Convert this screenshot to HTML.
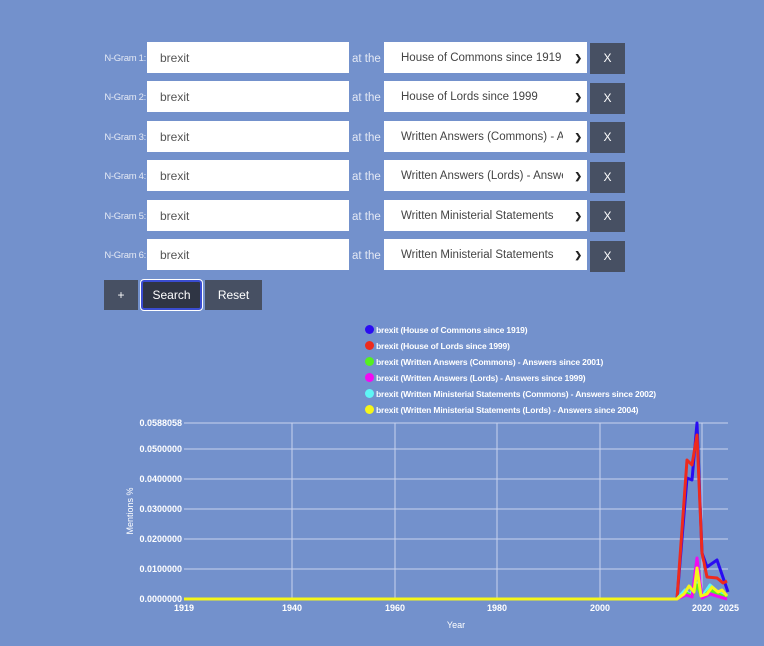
<!DOCTYPE html>
<html><head><style>
body{margin:0;width:764px;height:646px;background:#7391cc;font-family:"Liberation Sans",sans-serif;position:relative;overflow:hidden}
.a{position:absolute}
.lbl{font-size:9.5px;color:#e3e8f4;width:44px;text-align:right;white-space:nowrap;letter-spacing:-0.3px;margin-top:1px}
.inp{background:#fff;width:202px;height:31px;font-size:12px;color:#555;line-height:32px;box-sizing:border-box;padding-left:13px}
.at{font-size:11.5px;color:#e3e8f4;margin-top:2px}
.sel{background:#fff;width:203px;height:31px;font-size:11.5px;color:#444;line-height:32px;box-sizing:border-box;padding-left:17px;white-space:nowrap;overflow:hidden}
.sel b{display:block;width:162px;overflow:hidden;font-weight:normal}
.sel span.c{position:absolute;right:5px;top:0;font-size:9px;color:#222;font-weight:bold}
.x{background:#475063;width:35px;height:31px;color:#fff;font-size:12px;text-align:center;line-height:31px}
.btn{background:#475063;color:#fff;height:30px;line-height:30px;font-size:12px;text-align:center}
.lg{font-size:8.5px;color:#fff;left:365px;font-weight:bold;letter-spacing:-0.15px}
.lg i{display:inline-block;width:9px;height:9px;border-radius:50%;vertical-align:-1px;margin-right:2px}
</style></head><body>
<div class="a lbl" style="left:102px;top:52px">N-Gram 1:</div><div class="a inp" style="left:147px;top:42px">brexit</div><div class="a at" style="left:352px;top:51px">at the</div><div class="a sel" style="left:384px;top:42px"><b>House of Commons since 1919</b><span class="c">&#10095;</span></div><div class="a x" style="left:590px;top:43px">X</div>
<div class="a lbl" style="left:102px;top:91px">N-Gram 2:</div><div class="a inp" style="left:147px;top:81px">brexit</div><div class="a at" style="left:352px;top:90px">at the</div><div class="a sel" style="left:384px;top:81px"><b>House of Lords since 1999</b><span class="c">&#10095;</span></div><div class="a x" style="left:590px;top:83px">X</div>
<div class="a lbl" style="left:102px;top:131px">N-Gram 3:</div><div class="a inp" style="left:147px;top:121px">brexit</div><div class="a at" style="left:352px;top:130px">at the</div><div class="a sel" style="left:384px;top:121px"><b>Written Answers (Commons) - Answers</b><span class="c">&#10095;</span></div><div class="a x" style="left:590px;top:122px">X</div>
<div class="a lbl" style="left:102px;top:170px">N-Gram 4:</div><div class="a inp" style="left:147px;top:160px">brexit</div><div class="a at" style="left:352px;top:169px">at the</div><div class="a sel" style="left:384px;top:160px"><b>Written Answers (Lords) - Answers</b><span class="c">&#10095;</span></div><div class="a x" style="left:590px;top:162px">X</div>
<div class="a lbl" style="left:102px;top:210px">N-Gram 5:</div><div class="a inp" style="left:147px;top:200px">brexit</div><div class="a at" style="left:352px;top:209px">at the</div><div class="a sel" style="left:384px;top:200px"><b>Written Ministerial Statements</b><span class="c">&#10095;</span></div><div class="a x" style="left:590px;top:201px">X</div>
<div class="a lbl" style="left:102px;top:249px">N-Gram 6:</div><div class="a inp" style="left:147px;top:239px">brexit</div><div class="a at" style="left:352px;top:248px">at the</div><div class="a sel" style="left:384px;top:239px"><b>Written Ministerial Statements</b><span class="c">&#10095;</span></div><div class="a x" style="left:590px;top:241px">X</div>
<div class="a btn" style="left:104px;top:280px;width:34px">+</div>
<div class="a btn" style="left:141px;top:280px;width:57px;height:26px;line-height:26px;background:#2f3544;border:2px solid #3a4cd0;border-radius:3px;outline:1px solid #fff">Search</div>
<div class="a btn" style="left:205px;top:280px;width:57px">Reset</div>
<div class="a lg" style="top:325px"><i style="background:#2a0cf2"></i>brexit (House of Commons since 1919)</div>
<div class="a lg" style="top:341px"><i style="background:#ee2a1e"></i>brexit (House of Lords since 1999)</div>
<div class="a lg" style="top:357px"><i style="background:#55f020"></i>brexit (Written Answers (Commons) - Answers since 2001)</div>
<div class="a lg" style="top:373px"><i style="background:#f20af2"></i>brexit (Written Answers (Lords) - Answers since 1999)</div>
<div class="a lg" style="top:389px"><i style="background:#5ef6f6"></i>brexit (Written Ministerial Statements (Commons) - Answers since 2002)</div>
<div class="a lg" style="top:405px"><i style="background:#f6f61a"></i>brexit (Written Ministerial Statements (Lords) - Answers since 2004)</div>
<svg class="a" style="left:0;top:0" width="764" height="646">
<g stroke="#c8d3ee" stroke-width="1">
<line x1="184" y1="423" x2="728" y2="423"/><line x1="184" y1="449" x2="728" y2="449"/><line x1="184" y1="479" x2="728" y2="479"/><line x1="184" y1="509" x2="728" y2="509"/><line x1="184" y1="539" x2="728" y2="539"/><line x1="184" y1="569" x2="728" y2="569"/>
<line x1="292" y1="423" x2="292" y2="599"/><line x1="395" y1="423" x2="395" y2="599"/><line x1="497" y1="423" x2="497" y2="599"/><line x1="600" y1="423" x2="600" y2="599"/><line x1="702" y1="423" x2="702" y2="599"/>
</g>
<g font-family="Liberation Sans" font-size="9" font-weight="bold" fill="#fff" text-anchor="end">
<text x="182" y="426">0.0588058</text><text x="182" y="452">0.0500000</text><text x="182" y="482">0.0400000</text><text x="182" y="512">0.0300000</text><text x="182" y="542">0.0200000</text><text x="182" y="572">0.0100000</text><text x="182" y="602">0.0000000</text>
</g>
<g font-family="Liberation Sans" font-size="9" font-weight="bold" fill="#fff" text-anchor="middle">
<text x="184" y="611">1919</text><text x="292" y="611">1940</text><text x="395" y="611">1960</text><text x="497" y="611">1980</text><text x="600" y="611">2000</text><text x="702" y="611">2020</text><text x="729" y="611">2025</text>
</g>
<text x="456" y="628" font-family="Liberation Sans" font-size="9" fill="#fff" text-anchor="middle">Year</text>
<text x="133" y="511" font-family="Liberation Sans" font-size="9" fill="#fff" text-anchor="middle" transform="rotate(-90 133 511)">Mentions %</text>
<g fill="none" stroke-width="3" stroke-linejoin="round">
<polyline stroke="#2a0cf2" points="184,599 677,599 687,478 692,480 697,423 702,553 707,567 717,560 728,592"/>
<polyline stroke="#ee2a1e" points="184,599 677,599 687,460 692,465 697,435 702,553 707,577 717,578 723,583 727,581"/>
<polyline stroke="#5ef6f6" points="677,599 685,590 690,595 697,583 702,597 710,585 718,592 727,597"/>
<polyline stroke="#55f020" points="677,599 686,593 692,596 697,585 702,598 710,590 727,598"/>
<polyline stroke="#f20af2" points="677,599 686,595 692,597 697,558 702,598 710,594 727,599"/>
<polyline stroke="#f6f61a" points="184,599 677,599 684,594 689,586 694,592 697,568 701,596 707,594 712,587 718,592 722,590 727,596"/>
</g>
</svg>
</body></html>
